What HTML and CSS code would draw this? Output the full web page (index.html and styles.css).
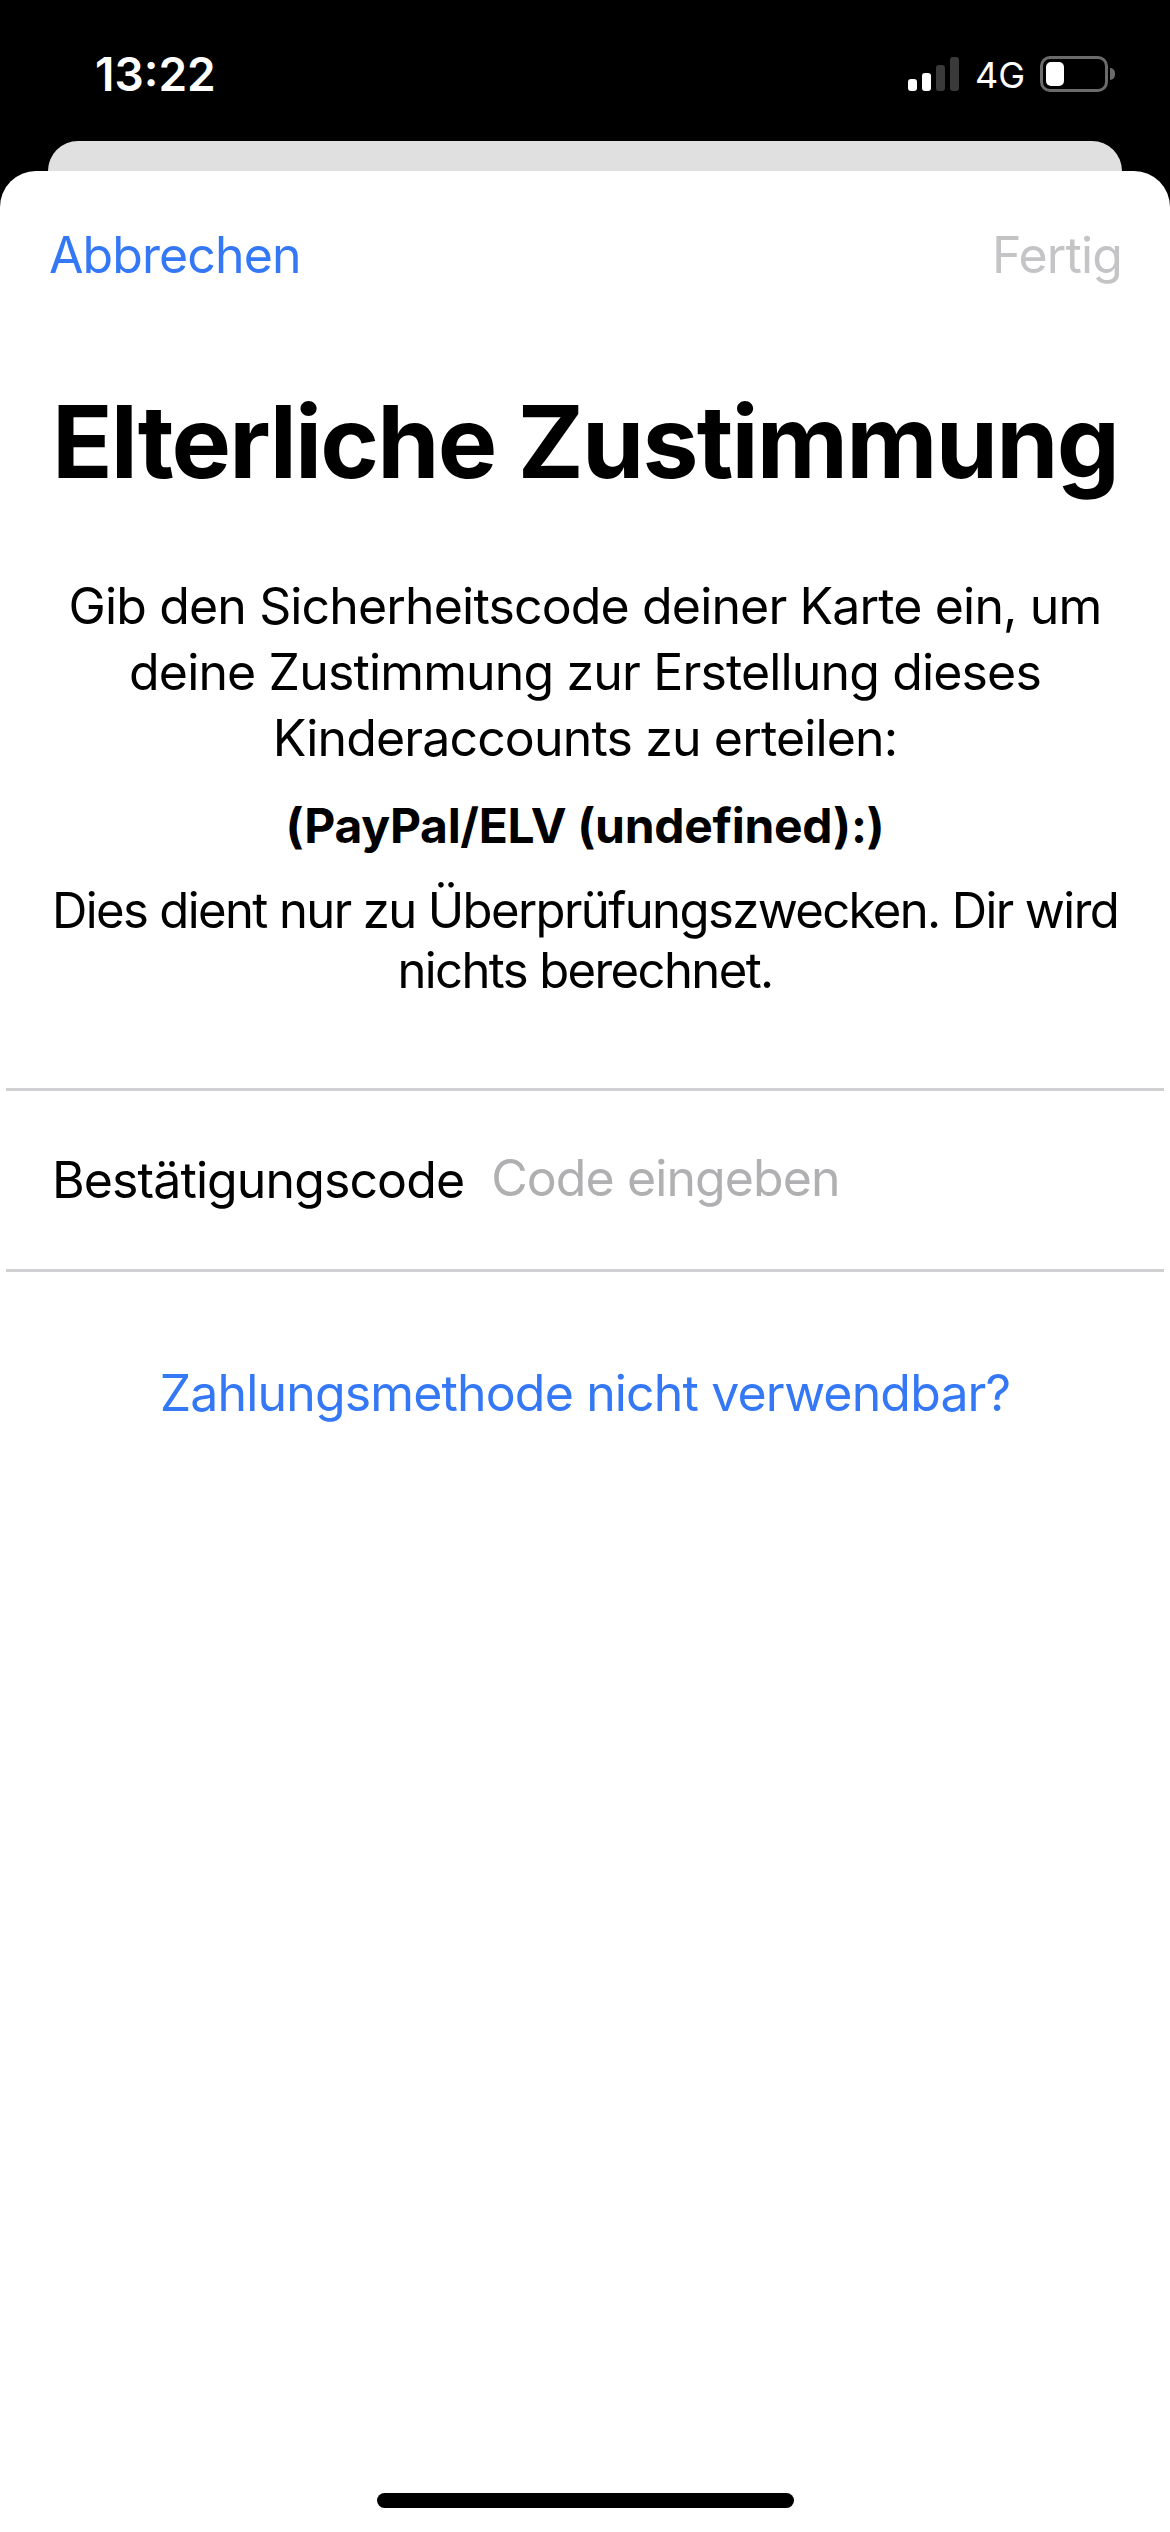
FILE: index.html
```html
<!DOCTYPE html>
<html lang="de">
<head>
<meta charset="utf-8">
<title>Elterliche Zustimmung</title>
<link rel="stylesheet" href="styles.css">
</head>
<body>

<div class="status">
	<div class="time">13:22</div>
	<div class="status-right">
		<div class="signal">
			<span class="bar b1"></span>
			<span class="bar b2"></span>
			<span class="bar b3"></span>
			<span class="bar b4"></span>
		</div>
		<div class="net">4G</div>
		<div class="battery">
			<div class="battery-body"><div class="battery-fill"></div></div>
			<div class="battery-nub"></div>
		</div>
	</div>
</div>

<div class="back-card"></div>

<div class="sheet">
	<div class="nav">
		<span class="link">Abbrechen</span>
		<span class="done">Fertig</span>
	</div>

	<h1>Elterliche Zustimmung</h1>

	<p class="intro">Gib den Sicherheitscode deiner Karte ein, um<br>deine Zustimmung zur Erstellung dieses<br>Kinderaccounts zu erteilen:</p>
	<p class="method">(PayPal/ELV (undefined):)</p>
	<p class="note">Dies dient nur zu Überprüfungszwecken. Dir wird<br>nichts berechnet.</p>

	<div class="field">
		<span class="field-label">Bestätigungscode</span>
		<span class="field-hint">Code eingeben</span>
	</div>

	<div class="alt"><span class="link">Zahlungsmethode nicht verwendbar?</span></div>

	<div class="home"></div>
</div>

</body>
</html>
```

FILE: styles.css
```css
html, body {
	margin: 0;
	height: 100%;
}

body {
	width: 1170px;
	height: 2532px;
	display: flex;
	flex-direction: column;
	background: #000;
	font-family: Inter, "Liberation Sans", sans-serif;
	overflow: hidden;
}

.status {
	height: 141px;
	box-sizing: border-box;
	padding: 50px 55px 0 95px;
	display: flex;
	justify-content: space-between;
	align-items: flex-start;
	color: #fff;
}

.time {
	font-size: 46px;
	line-height: 48px;
	font-weight: 600;
}

.status-right {
	display: flex;
	align-items: flex-start;
	padding-top: 7px;
}

.signal {
	display: flex;
	align-items: flex-end;
	gap: 5px;
	height: 34px;
}

.bar {
	width: 9px;
	border-radius: 3px;
	background: #3a3a3a;
}

.b1 { height: 12px; background: #fff; }
.b2 { height: 18px; background: #fff; }
.b3 { height: 26px; }
.b4 { height: 34px; }

.net {
	margin-left: 16px;
	font-size: 36px;
	line-height: 36px;
	font-weight: 400;
}

.battery {
	margin-left: 15px;
	margin-top: -1px;
	display: flex;
	align-items: center;
}

.battery-body {
	width: 68px;
	height: 36px;
	box-sizing: border-box;
	border: 3px solid #6b6b6b;
	border-radius: 10px;
	padding: 3px;
}

.battery-fill {
	width: 18px;
	height: 24px;
	border-radius: 5px;
	background: #fff;
}

.battery-nub {
	margin-left: 2px;
	width: 5px;
	height: 12px;
	border-radius: 0 6px 6px 0;
	background: #6b6b6b;
}

.back-card {
	height: 30px;
	margin: 0 48px;
	background: #e0e0e0;
	border-radius: 30px 30px 0 0;
}

.sheet {
	flex: 1;
	display: flex;
	flex-direction: column;
	background: #fff;
	border-radius: 36px 36px 0 0;
	color: #000;
}

.nav {
	display: flex;
	justify-content: space-between;
	padding: 53px 48px 0 49px;
	font-size: 50px;
	letter-spacing: -0.9px;
	line-height: 62px;
}

.link {
	color: #3478f6;
}

.done {
	color: #c4c4c6;
}

h1 {
	margin: 94px 0 0;
	font-size: 100px;
	letter-spacing: -1.8px;
	line-height: 124px;
	font-weight: 700;
	text-align: center;
}

p {
	margin: 0;
	text-align: center;
}

.intro {
	margin-top: 69px;
	font-size: 50px;
	letter-spacing: -0.85px;
	line-height: 66px;
}

.method {
	margin-top: 24px;
	font-weight: 700;
	font-size: 48px;
	letter-spacing: -0.3px;
	line-height: 62px;
}

.note {
	margin-top: 24px;
	font-size: 49px;
	letter-spacing: -1.6px;
	line-height: 60px;
}

.field {
	margin: 87px 6px 0;
	height: 184px;
	box-sizing: border-box;
	border-top: 3px solid #d0d0d2;
	border-bottom: 3px solid #d0d0d2;
	padding-left: 46px;
	display: flex;
	align-items: center;
	gap: 27px;
	font-size: 50px;
	letter-spacing: -0.9px;
}

.field-hint {
	padding-bottom: 5px;
	color: #b0b0b2;
}

.alt {
	margin-top: 90px;
	text-align: center;
	font-size: 50px;
	letter-spacing: -0.85px;
	line-height: 62px;
}

.home {
	margin: auto auto 24px;
	width: 417px;
	height: 15px;
	border-radius: 8px;
	background: #000;
}
```
